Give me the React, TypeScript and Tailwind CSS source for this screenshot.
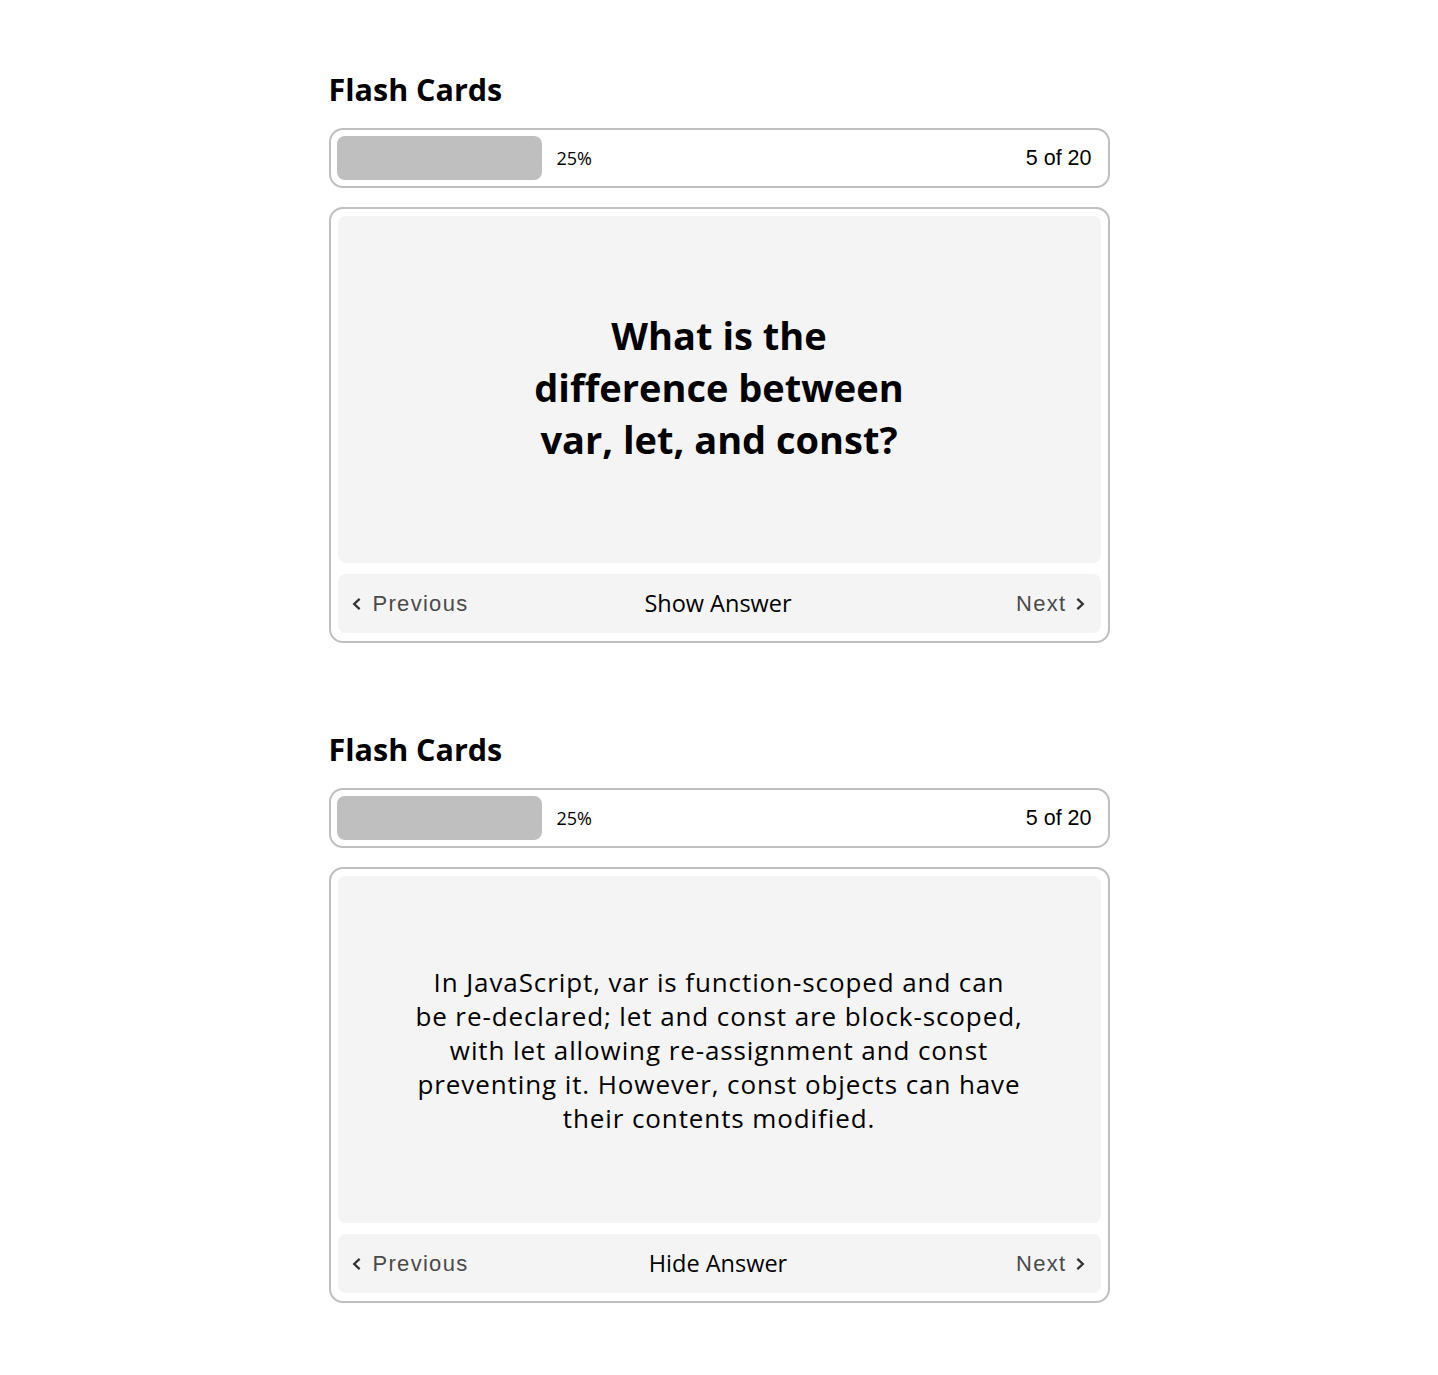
import React from "react";

const MAIN = { fontFamily: '"Open Sans", "Noto Sans", sans-serif' };
const UI = { fontFamily: '"Liberation Sans", Arial, sans-serif' };

function ChevronLeft() {
  return (
    <svg width="10" height="14" viewBox="0 0 10 14" fill="none" className="shrink-0">
      <polyline points="7.8,2.6 3.2,7 7.8,11.4" stroke="#333333" strokeWidth="2.3" strokeLinecap="square" strokeLinejoin="miter" />
    </svg>
  );
}

function ChevronRight() {
  return (
    <svg width="10" height="14" viewBox="0 0 10 14" fill="none" className="shrink-0">
      <polyline points="2.2,2.6 6.8,7 2.2,11.4" stroke="#333333" strokeWidth="2.3" strokeLinecap="square" strokeLinejoin="miter" />
    </svg>
  );
}

function FlashCardSection({ showAnswer }: { showAnswer: boolean }) {
  return (
    <section className="w-[781px] mx-auto">
      <h2 className="text-[30.5px] leading-[40px] font-bold text-black mb-[19px]" style={MAIN}>
        Flash Cards
      </h2>
      <div className="h-[60px] border-2 border-[#bfbfbf] rounded-[14px] p-[6px] flex items-center">
        <div className="h-[44px] w-[205px] bg-[#bfbfbf] rounded-[8px] shrink-0" />
        <span className="ml-[15px] text-[18px] text-black" style={MAIN}>
          25%
        </span>
        <span className="ml-auto mr-[10px] text-[21.5px] text-black" style={UI}>
          5 of 20
        </span>
      </div>
      <div className="mt-[19px] border-2 border-[#bfbfbf] rounded-[14px] p-[7px] pb-[8px] flex flex-col gap-[11px]">
        {showAnswer ? (
          <div className="h-[347px] bg-[#f4f4f4] rounded-[8px] flex items-center justify-center">
            <p className="text-center text-[26px] leading-[34px] tracking-[0.9px] text-black whitespace-nowrap" style={MAIN}>
              In JavaScript, var is function-scoped and can
              <br />
              be re-declared; let and const are block-scoped,
              <br />
              with let allowing re-assignment and const
              <br />
              preventing it. However, const objects can have
              <br />
              their contents modified.
            </p>
          </div>
        ) : (
          <div className="h-[347px] bg-[#f4f4f4] rounded-[8px] flex items-center justify-center pb-[6px]">
            <p className="max-w-[400px] text-center text-[38px] leading-[52px] font-bold text-black" style={MAIN}>
              What is the difference between var, let, and const?
            </p>
          </div>
        )}
        <div className="h-[59px] bg-[#f4f4f4] rounded-[8px] pl-[13px] pr-[15px] grid grid-cols-3 items-center">
          <button className="flex items-center gap-[12px] justify-self-start text-[22px] tracking-[1.3px] text-[#4a4a4a]" style={UI}>
            <ChevronLeft />
            <span>Previous</span>
          </button>
          <button className="justify-self-center text-[23.5px] text-black whitespace-nowrap" style={MAIN}>
            {showAnswer ? "Hide Answer" : "Show Answer"}
          </button>
          <button className="flex items-center gap-[9px] justify-self-end text-[22px] tracking-[1.3px] text-[#4a4a4a]" style={UI}>
            <span>Next</span>
            <ChevronRight />
          </button>
        </div>
      </div>
    </section>
  );
}

export default function App() {
  return (
    <div className="min-h-[1375px] bg-white pt-[69px] pb-[72px] flex flex-col gap-[86px]">
      <FlashCardSection showAnswer={false} />
      <FlashCardSection showAnswer={true} />
    </div>
  );
}
